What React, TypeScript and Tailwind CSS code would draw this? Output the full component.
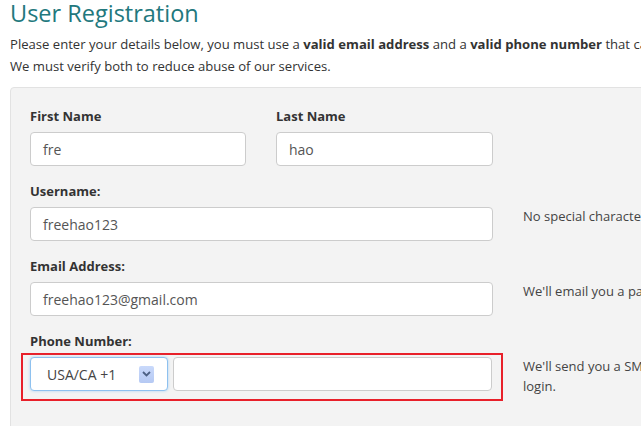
import React from 'react';

const font = { fontFamily: '"Open Sans", "DejaVu Sans", sans-serif' };

const Label: React.FC<{ children: React.ReactNode }> = ({ children }) => (
  <label className="block h-[18px] leading-[18px] text-[13px] font-bold text-[#333] mb-[7px]">{children}</label>
);

const TextInput: React.FC<{ value?: string; className?: string }> = ({ value = '', className = '' }) => (
  <div
    className={`h-[34px] bg-white border border-[#cccccc] rounded-[4px] px-[12px] flex items-center text-[14px] text-[#555] ${className}`}
  >
    {value}
  </div>
);

const Help: React.FC<{ children: React.ReactNode }> = ({ children }) => (
  <div className="shrink-0 -mt-[1px] text-[13px] leading-[20px] text-[#444] whitespace-nowrap">{children}</div>
);

export default function App() {
  return (
    <div className="w-[641px] h-[426px] overflow-hidden bg-white" style={font}>
      <div className="pl-[10px] w-[1000px]">
        <h1 className="text-[23.5px] leading-[27px] text-[#22787d]">User Registration</h1>
        <p className="mt-[6px] text-[13.1px] leading-[22px] text-[#333] whitespace-nowrap">
          Please enter your details below, you must use a <b>valid email address</b> and a <b>valid phone number</b> that can
          receive text messages.
          <br />
          We must verify both to reduce abuse of our services.
        </p>

        <div className="mt-[10px] bg-[#f3f3f3] border border-[#e2e2e2] rounded-[4px] pl-[19px] pt-[19px] pb-[40px]">
          {/* names */}
          <div className="flex gap-[30px] mb-[16px]">
            <div className="w-[216px]">
              <Label>First Name</Label>
              <TextInput value="fre" />
            </div>
            <div className="w-[217px]">
              <Label>Last Name</Label>
              <TextInput value="hao" />
            </div>
          </div>

          <Label>Username:</Label>
          <div className="flex gap-[30px] mb-[16px]">
            <TextInput value="freehao123" className="w-[463px] shrink-0" />
            <Help>No special characters or spaces, letters and numbers only.</Help>
          </div>

          <Label>Email Address:</Label>
          <div className="flex gap-[30px] mb-[16px]">
            <TextInput value="freehao123@gmail.com" className="w-[463px] shrink-0" />
            <Help>We'll email you a password to activate your account.</Help>
          </div>

          <Label>Phone Number:</Label>
          <div className="flex gap-[20px] -mt-[4px]">
            <div className="-ml-[9px] w-[482px] h-[48px] shrink-0 border-2 border-[#e8202a] pl-[7px] pt-[2px] flex gap-[5px]">
              <div className="w-[138px] h-[34px] bg-white border border-[#8ec1ef] rounded-[4px] shadow-[0_0_3px_#a9d2f5] flex items-center pl-[16px] pr-[13px] text-[14px] text-[#444]">
                <span className="flex-1">USA/CA +1</span>
                <span className="w-[15px] h-[17px] rounded-[2px] bg-gradient-to-b from-[#c9d9fb] to-[#b5c9f3] flex items-center justify-center">
                  <svg width="9" height="6" viewBox="0 0 9 6">
                    <path d="M1 1 L4.5 4.5 L8 1" fill="none" stroke="#4d6185" strokeWidth="1.8" />
                  </svg>
                </span>
              </div>
              <TextInput className="w-[319px]" />
            </div>
            <div className="pt-[4px]">
              <Help>
                We'll send you a SMS with a verification code to confirm your phone number before you can
                <br />
                login.
              </Help>
            </div>
          </div>
        </div>
      </div>
    </div>
  );
}
